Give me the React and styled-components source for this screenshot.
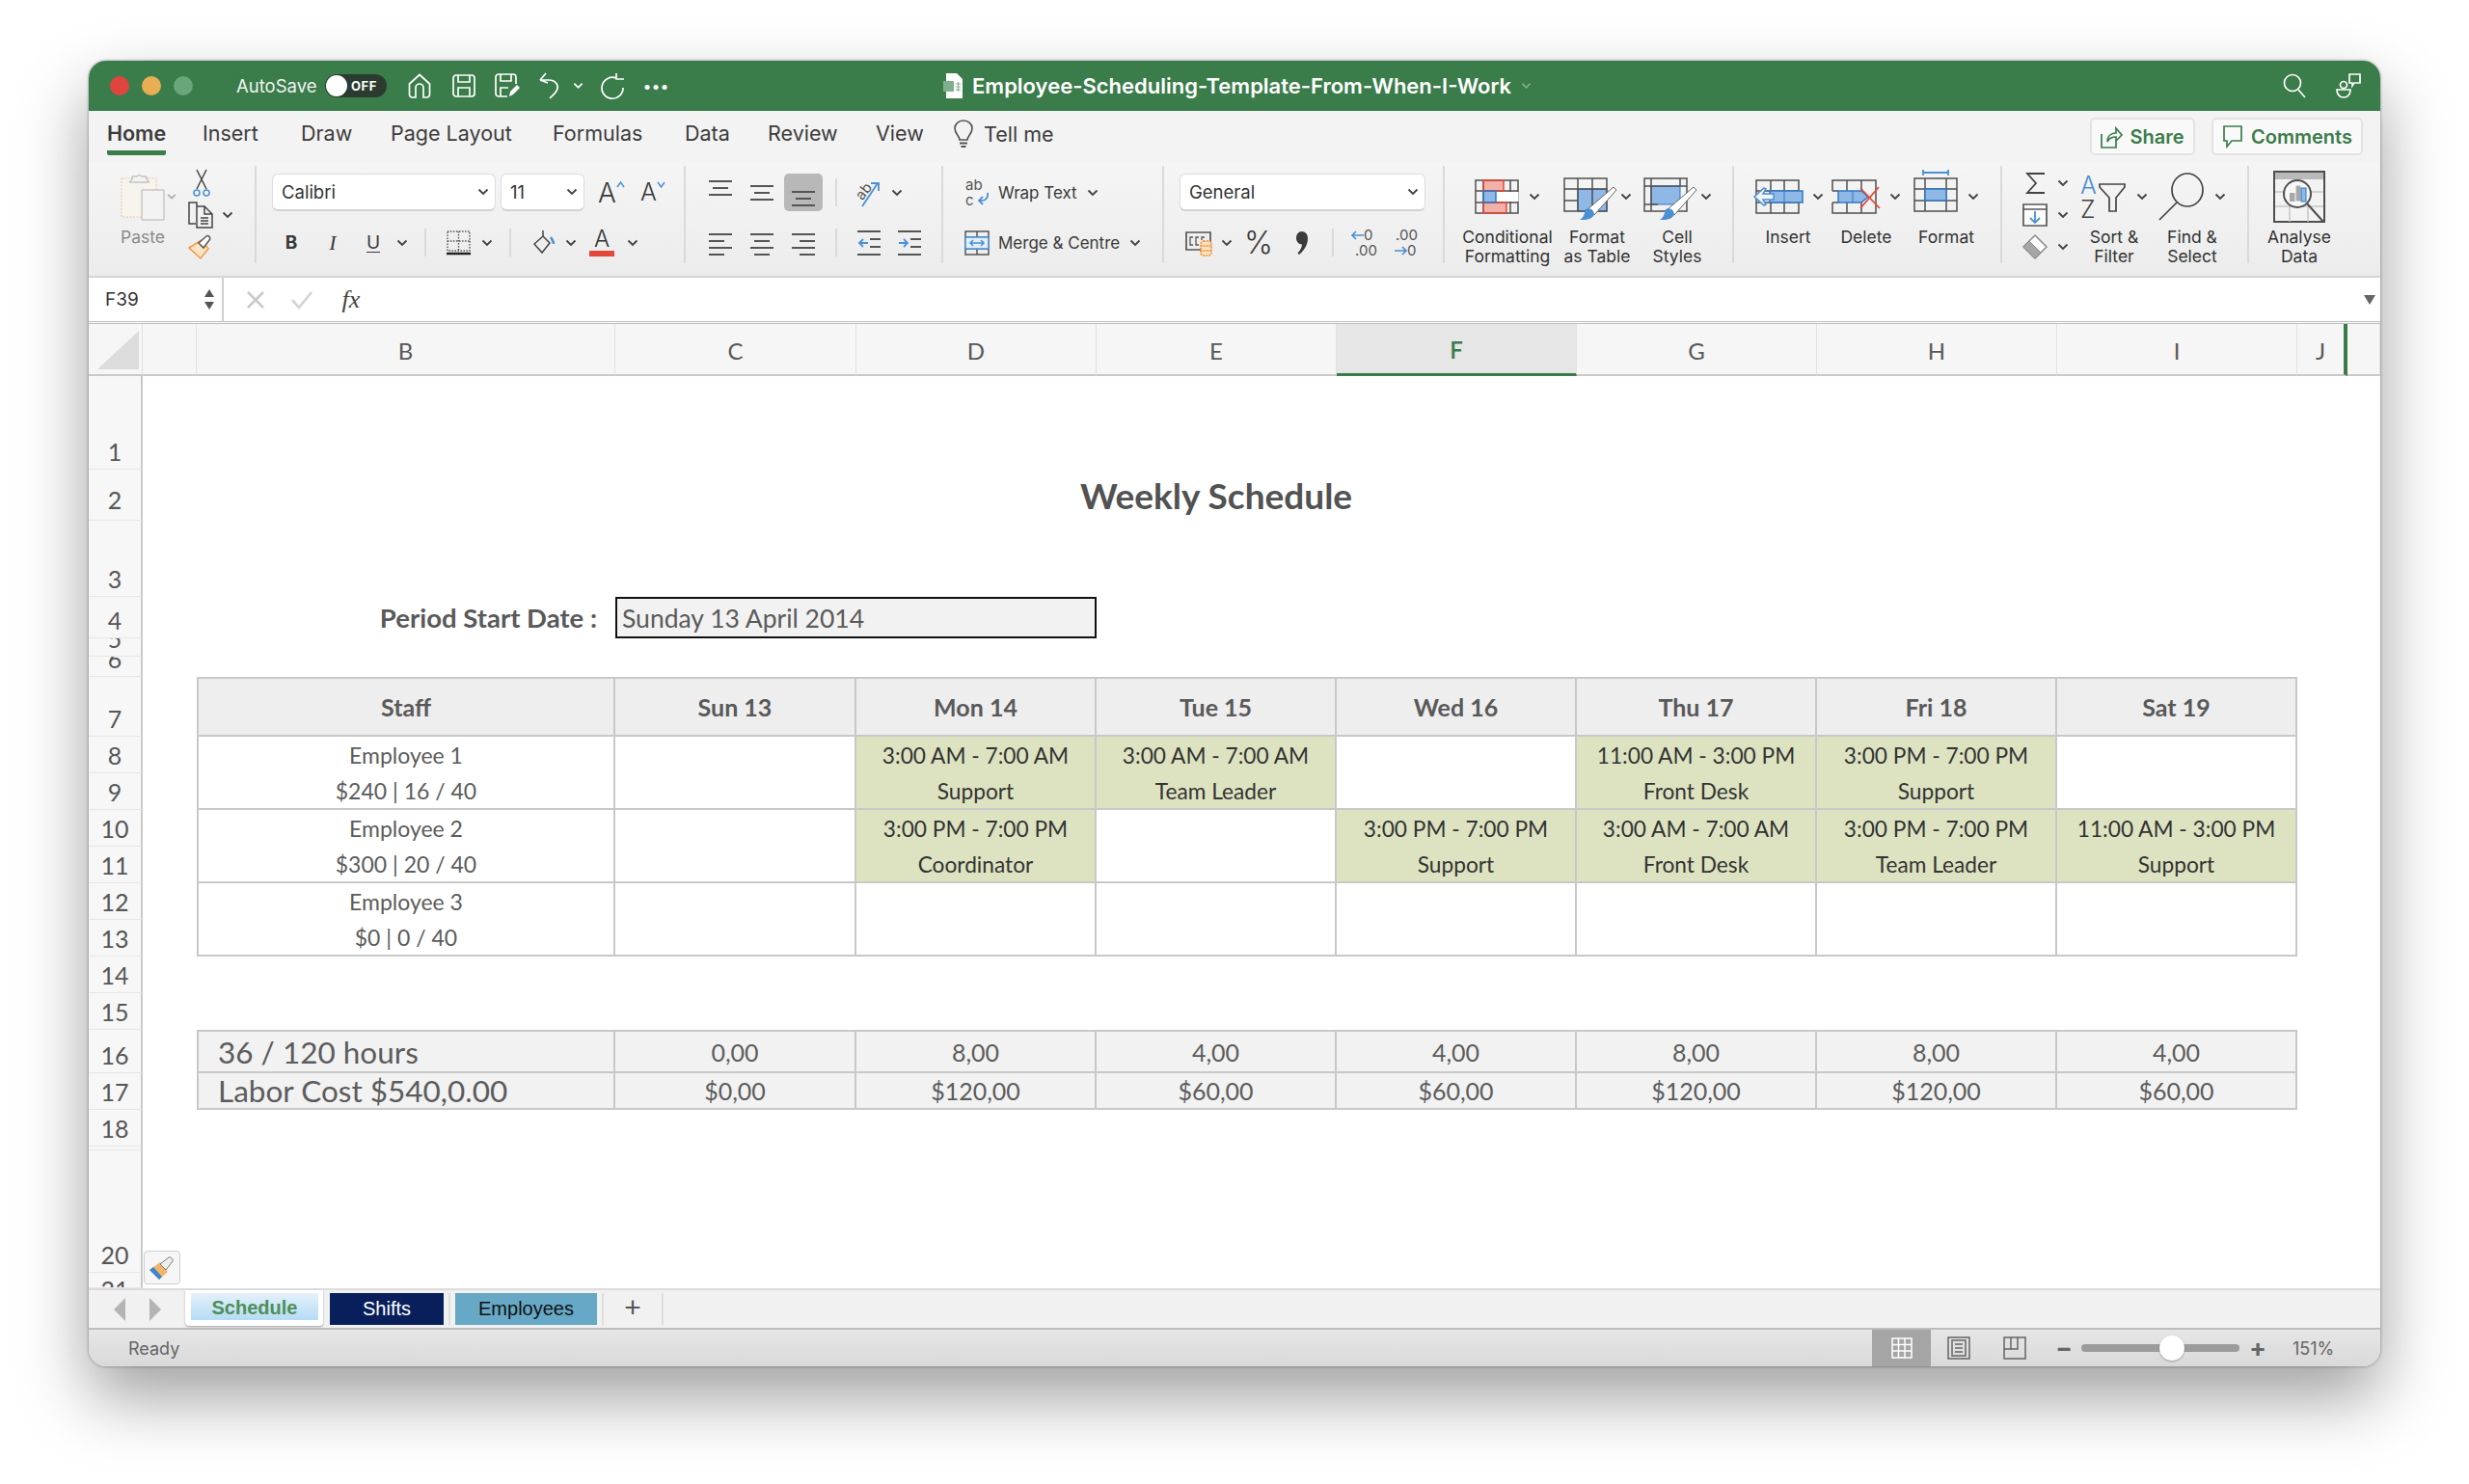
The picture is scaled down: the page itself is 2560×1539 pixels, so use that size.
import React from "react";
import styled, { createGlobalStyle } from "styled-components";

const GREEN = "#3a7c4a";
const INK = "#4a4a4a";
const BLUE = "#4a90d6";
const FILL = "#8fb8e6";
const RED = "#e2483a";
const UI = `Inter, "Liberation Sans", sans-serif`;
const SHEET = `Lato, "Open Sans", sans-serif`;

const Global = createGlobalStyle`
  html, body { margin: 0; background: #fff; }
  * { box-sizing: border-box; }
  svg { overflow: visible; }
`;

const Page = styled.div`
  padding: 63px 92px 122px;
  font-family: ${UI};
  color: #333;
`;

const Window = styled.div`
  width: 2376px;
  height: 1354px;
  display: flex;
  flex-direction: column;
  border-radius: 18px;
  overflow: hidden;
  background: #f3f3f3;
  box-shadow: 0 32px 70px rgba(0, 0, 0, 0.38), 0 0 3px rgba(0, 0, 0, 0.45);
`;

const Slot = styled.span`
  flex: none;
  display: inline-flex;
  align-items: center;
  justify-content: center;
  width: ${(p) => p.$w}px;
  margin-left: ${(p) => p.$ml || 0}px;
  height: ${(p) => (p.$active ? "39px" : "auto")};
  border-radius: 5px;
  background: ${(p) => (p.$active ? "#b8b8b8" : "transparent")};
`;

/* title bar */
const TitleBar = styled.div`
  flex: none;
  height: 52px;
  display: flex;
  align-items: center;
  padding: 0 11px 0 22px;
  background: ${GREEN};
  color: #fff;
`;
const Light = styled.span`
  flex: none;
  width: 20px;
  height: 20px;
  margin-right: 13px;
  border-radius: 50%;
  background: ${(p) => p.$c};
`;
const AutoSave = styled.span`
  margin-left: 32px;
  width: 92px;
  font-size: 18.5px;
  opacity: 0.92;
`;
const Toggle = styled.span`
  flex: none;
  width: 64px;
  height: 24px;
  margin-right: 11px;
  display: flex;
  align-items: center;
  padding-left: 1px;
  border-radius: 12px;
  background: #2b3b30;
  font-size: 13px;
  font-weight: 700;
  letter-spacing: 0.5px;
  &::before {
    content: "";
    width: 22px;
    height: 22px;
    margin-right: 4px;
    border-radius: 50%;
    background: #fff;
  }
`;
const DocTitle = styled.span`
  margin-left: 281px;
  display: flex;
  align-items: center;
  gap: 10px;
  font-size: 22px;
  font-weight: 600;
`;
const TitleRight = styled.span`
  margin-left: auto;
  display: flex;
  gap: 12px;
`;

/* menu bar */
const MenuBar = styled.div`
  flex: none;
  height: 53px;
  display: flex;
  align-items: flex-start;
  padding: 7px 18px 0 19px;
`;
const Tab = styled.span`
  flex: none;
  width: ${(p) => p.$w}px;
  padding-top: 4px;
  font-size: 21.5px;
  line-height: 24px;
`;
const TabText = styled.span`
  display: inline-block;
  padding-bottom: 6px;
  border-bottom: 5px solid ${(p) => (p.$active ? GREEN : "transparent")};
  border-radius: 2px;
  font-weight: ${(p) => (p.$active ? 600 : 400)};
  color: #3c3c3c;
`;
const TellMe = styled.span`
  display: flex;
  align-items: center;
  gap: 10px;
  padding-top: 2px;
  font-size: 21.5px;
  line-height: 28px;
  color: #3c3c3c;
`;
const Actions = styled.span`
  margin-left: auto;
  display: flex;
  gap: 17px;
`;
const ActionButton = styled.span`
  width: ${(p) => p.$w}px;
  height: 39px;
  display: flex;
  align-items: center;
  justify-content: center;
  gap: 8px;
  border: 2px solid #e3e3e3;
  border-radius: 5px;
  background: #f9f9f9;
  color: ${GREEN};
  font-size: 20px;
  font-weight: 600;
`;

/* ribbon */
const Ribbon = styled.div`
  flex: none;
  height: 120px;
  display: flex;
  padding-top: 4px;
  background: linear-gradient(#f5f5f5, #ececec);
  border-bottom: 2px solid #d4d4d4;
`;
const Group = styled.div`
  flex: none;
  width: ${(p) => p.$w}px;
  height: 101px;
  display: flex;
  flex-direction: ${(p) => (p.$col ? "column" : "row")};
  gap: ${(p) => (p.$col ? "13px" : 0)};
  padding: ${(p) => (p.$col ? "8px" : 0)} 0 0 ${(p) => p.$pl || 0}px;
  border-right: ${(p) => (p.$last ? "none" : "2px solid #dadada")};
`;
const Row = styled.div`
  flex: none;
  height: 39px;
  display: flex;
  align-items: center;
`;
const Select = styled.span`
  flex: none;
  width: ${(p) => p.$w}px;
  height: 39px;
  margin-right: 5px;
  display: flex;
  align-items: center;
  justify-content: space-between;
  padding: 0 6px 0 9px;
  border: 1px solid #dcdcdc;
  border-bottom: 2px solid #d2d2d2;
  border-radius: 6px;
  background: #fff;
  font-size: 18.5px;
  color: #333;
`;
const ToolText = styled.span`
  font-family: ${(p) => (p.$serif ? `"Liberation Serif", serif` : UI)};
  font-size: ${(p) => p.$size || 19}px;
  font-weight: ${(p) => p.$weight || 400};
  font-style: ${(p) => (p.$italic ? "italic" : "normal")};
  text-decoration: ${(p) => (p.$under ? "underline" : "none")};
  text-underline-offset: 3px;
  line-height: 1;
  color: ${(p) => p.$color || "#3a3a3a"};
`;
const RowLabel = styled.span`
  flex: none;
  margin: 0 10px 0 5px;
  font-size: 17px;
  color: #3a3a3a;
`;
const VSep = styled.span`
  width: 2px;
  height: 29px;
  background: #dadada;
`;
const ColorA = styled.span`
  display: inline-flex;
  flex-direction: column;
  align-items: center;
  font-size: 24px;
  line-height: 22px;
  font-weight: 300;
  color: #333;
  &::after {
    content: "";
    width: 26px;
    height: 6px;
    margin-top: 1px;
    background: ${RED};
  }
`;
const Small = styled.div`
  flex: none;
  width: ${(p) => p.$w}px;
  margin-left: ${(p) => p.$ml || 0}px;
  padding-top: 1px;
  display: flex;
  flex-direction: column;
`;
const SmallRow = styled.div`
  height: 36.5px;
  display: flex;
  align-items: center;
`;
const Big = styled.div`
  flex: none;
  width: ${(p) => p.$w}px;
  display: flex;
  flex-direction: column;
  align-items: center;
`;
const BigIcon = styled.div`
  flex: none;
  height: 64px;
  display: flex;
  align-items: center;
  gap: ${(p) => p.$gap ?? 10}px;
`;
const BigLabel = styled.div`
  flex: none;
  font-size: 17.5px;
  line-height: 20px;
  text-align: center;
  white-space: pre-line;
  color: ${(p) => (p.$muted ? "#8a8a8a" : "#333")};
`;

/* formula bar */
const FormulaBar = styled.div`
  flex: none;
  height: 48px;
  display: flex;
  align-items: center;
  background: #fff;
  border-bottom: 3px double #bdbdbd;
`;
const NameBox = styled.div`
  flex: none;
  width: 140px;
  height: 100%;
  display: flex;
  align-items: center;
  justify-content: space-between;
  padding: 0 8px 0 17px;
  border-right: 2px solid #cfcfcf;
  font-size: 19px;
  color: #333;
`;
const FxSep = styled.span`
  width: 2px;
  height: 26px;
  background: #e0e0e0;
`;
const Stepper = styled.span`
  display: flex;
  flex-direction: column;
  gap: 5px;
`;

/* sheet */
const Sheet = styled.div`
  position: relative;
  flex: none;
  height: 1000px;
  display: grid;
  grid-template-columns: 56px 56px 434px 250px repeat(6, 249px) 52px 1fr;
  grid-template-rows: 54px 97px 53px 79px 43px 19px 21px 62px repeat(8, 38px) 45px 38px 38px 4px 127px 16px;
  overflow: hidden;
  background: #fff;
  font-family: ${SHEET};
`;
const Corner = styled.div`
  grid-column: 1;
  grid-row: 1;
  padding: 7px 3px 5px 9px;
  background: #f6f6f6;
  border-right: 1px solid #e2e2e2;
  border-bottom: 2px solid #c9c9c9;
  &::before {
    content: "";
    display: block;
    width: 100%;
    height: 100%;
    background: #dcdcdc;
    clip-path: polygon(100% 0, 100% 100%, 0 100%);
  }
`;
const ColHead = styled.div`
  grid-column: ${(p) => p.$col};
  grid-row: 1;
  display: flex;
  align-items: center;
  justify-content: center;
  padding-top: 2px;
  background: ${(p) => (p.$on ? "#e6e6e6" : "#f6f6f6")};
  border-right: ${(p) => (p.$freeze ? `4px solid ${GREEN}` : "1px solid #e2e2e2")};
  border-bottom: ${(p) => (p.$on ? `3px solid ${GREEN}` : "2px solid #c9c9c9")};
  font-size: 24px;
  color: ${(p) => (p.$on ? GREEN : "#585858")};
  font-weight: ${(p) => (p.$on ? 600 : 400)};
`;
const RowHead = styled.div`
  grid-column: 1;
  grid-row: ${(p) => p.$row + 1};
  display: flex;
  justify-content: center;
  align-items: ${(p) => (p.$top ? "flex-start" : "flex-end")};
  overflow: hidden;
  padding: ${(p) => (p.$top ? "2px 0 0" : `0 0 ${p.$row === 2 ? 6 : 3}px`)};
  background: #f7f7f7;
  border-right: 2px solid #c9c9c9;
  border-bottom: 1px solid #e6e6e6;
  font-size: 25px;
  line-height: 30px;
  color: #565656;
`;
const SheetTitle = styled.div`
  grid-column: 4 / span 5;
  grid-row: 3;
  display: flex;
  align-items: center;
  justify-content: center;
  font-size: 37px;
  font-weight: 700;
  color: #525252;
`;
const DateLabel = styled.div`
  grid-column: 3;
  grid-row: 5;
  display: flex;
  align-items: center;
  justify-content: flex-end;
  padding-right: 19px;
  font-size: 27.5px;
  font-weight: 700;
  color: #595959;
`;
const DateBox = styled.div`
  grid-column: 4 / span 2;
  grid-row: 5;
  display: flex;
  align-items: center;
  padding-left: 5px;
  border: 2px solid #111;
  background: #f2f2f2;
  font-size: 26.5px;
  color: #5a5a5a;
`;
const Cell = styled.div`
  grid-column: ${(p) => p.$col};
  grid-row: ${(p) => p.$row} / span ${(p) => p.$span || 1};
  display: flex;
  flex-direction: column;
  align-items: ${(p) => (p.$start ? "flex-start" : "center")};
  justify-content: center;
  padding-left: ${(p) => (p.$start ? "20px" : 0)};
  padding-top: ${(p) => (p.$span ? "2px" : 0)};
  background: ${(p) => p.$bg || "#fff"};
  border-right: 2px solid #c8c8c8;
  border-bottom: 2px solid #c8c8c8;
  border-top: ${(p) => (p.$top ? "2px solid #c8c8c8" : "none")};
  border-left: ${(p) => (p.$left ? "2px solid #c8c8c8" : "none")};
  font-size: ${(p) => p.$size || 23}px;
  font-weight: ${(p) => p.$weight || 400};
  color: ${(p) => p.$color || "#5c5c5c"};
  white-space: nowrap;
`;
const Line = styled.div`
  height: 37px;
  line-height: 37px;
`;
const Painter = styled.div`
  position: absolute;
  left: 57px;
  top: 961px;
  width: 38px;
  height: 35px;
  display: flex;
  align-items: center;
  justify-content: center;
  border: 1.5px solid #cfcfcf;
  border-radius: 4px;
  background: #f6f6f6;
`;

/* sheet tabs */
const TabBar = styled.div`
  flex: none;
  height: 43px;
  display: flex;
  align-items: flex-start;
  padding-left: 13px;
  background: #f1f1f1;
  border-top: 2px solid #dcdcdc;
  border-bottom: 2px solid #bdbdbd;
`;
const Nav = styled.span`
  flex: none;
  width: ${(p) => p.$w}px;
  height: 39px;
  display: inline-flex;
  align-items: center;
  justify-content: center;
`;
const ActiveSheet = styled.span`
  flex: none;
  width: 143px;
  height: 37px;
  margin-left: 13px;
  padding: 3px 5px 0 6px;
  border-radius: 0 0 4px 4px;
  background: #fff;
  box-shadow: 0 1px 2px rgba(0, 0, 0, 0.35);
`;
const ActiveFace = styled.span`
  height: 28px;
  display: flex;
  align-items: center;
  justify-content: center;
  padding-top: 2px;
  background: linear-gradient(#e3f1fb, #b6dbf6);
  color: #4d8f57;
  font-family: "Liberation Sans", sans-serif;
  font-size: 20px;
  font-weight: 700;
`;
const SheetTab = styled.span`
  flex: none;
  width: ${(p) => p.$w}px;
  height: 33px;
  margin-top: 3px;
  margin-left: ${(p) => p.$ml || 0}px;
  display: flex;
  align-items: center;
  justify-content: center;
  background: ${(p) => p.$bg};
  color: ${(p) => p.$color};
  font-family: "Liberation Sans", sans-serif;
  font-size: 20px;
`;
const TabSep = styled.span`
  flex: none;
  width: 2px;
  height: 33px;
  margin: 3px ${(p) => p.$r}px 0 ${(p) => p.$l}px;
  background: #dedede;
`;
const Plus = styled.span`
  flex: none;
  width: 60px;
  height: 35px;
  display: flex;
  align-items: center;
  justify-content: center;
  font-family: "Liberation Sans", sans-serif;
  font-size: 30px;
  color: #555;
`;

/* status bar */
const StatusBar = styled.div`
  flex: 1;
  display: flex;
  align-items: center;
  padding-left: 41px;
  background: linear-gradient(#e6e6e6, #d9d9d9);
  font-size: 18px;
  color: #666;
`;
const ViewButton = styled.span`
  flex: none;
  width: ${(p) => p.$w}px;
  align-self: stretch;
  display: inline-flex;
  align-items: center;
  justify-content: center;
  margin-left: ${(p) => (p.$first ? "auto" : 0)};
  background: ${(p) => (p.$on ? "#a5a5a5" : "transparent")};
`;
const Zoom = styled.span`
  flex: none;
  width: 164px;
  height: 8px;
  margin: 0 9px 0 6px;
  display: flex;
  align-items: center;
  border-radius: 4px;
  background: #9c9c9c;
  padding-left: 81px;
  &::before {
    content: "";
    flex: none;
    width: 26px;
    height: 26px;
    border-radius: 50%;
    background: #fff;
    box-shadow: 0 1px 2px rgba(0, 0, 0, 0.3);
  }
`;
const ZoomText = styled.span`
  flex: none;
  width: 117px;
  padding-left: 26px;
`;

/* ---- icons ---- */
const Chev = ({ c = "#444", w = 12 }) => (
  <svg width={w} height="8" viewBox="0 0 12 8">
    <path d="M1.5 1.5 6 6l4.5-4.5" fill="none" stroke={c} strokeWidth="1.9" />
  </svg>
);

const Wh = ({ w, h, children, sw = 1.7 }) => (
  <svg width={w} height={h} viewBox={`0 0 ${w} ${h}`} fill="none" stroke="#fff" strokeWidth={sw}>
    {children}
  </svg>
);
const HomeI = () => (
  <Wh w={24} h={26}><path d="M1.5 11 12 1.5 22.5 11v11a3 3 0 0 1-3 3H16V15a4 4 0 0 0-8 0v10H4.500a3 3 0 0 1-3-3z" /></Wh>
);
const SaveI = () => (
  <Wh w={24} h={24}><path d="M1 4a3 3 0 0 1 3-3h16a3 3 0 0 1 3 3v16a3 3 0 0 1-3 3H4a3 3 0 0 1-3-3zM6 1v7h12V1M6 23v-9h12v9" /></Wh>
);
const SaveAsI = () => (
  <Wh w={26} h={26}>
    <path d="M13 24H4a3 3 0 0 1-3-3V4a3 3 0 0 1 3-3h15a3 3 0 0 1 3 3v7M6 1v7h11V1M6 24v-9h8" />
    <path d="m15 24 1-5 7-7 3 3-7 7z" fill="#fff" stroke="none" />
  </Wh>
);
const UndoI = () => (
  <Wh w={22} h={28}><path d="M1 8 7 1M1 8l8 3M1 8h9c7 0 10 5 9 9-1 4-5 7-8 10" /></Wh>
);
const RedoI = () => (
  <Wh w={28} h={28}><path d="M18 6a11 11 0 1 0 7 10M18 1v6h8" /></Wh>
);
const SearchI = () => (
  <Wh w={24} h={26}><circle cx="10" cy="10" r="8.500" /><path d="m16 17 7 8" /></Wh>
);
const ChatI = () => (
  <Wh w={28} h={28}>
    <circle cx="9" cy="13" r="3.500" /><path d="M2 18h14c0 5-3 8-7 8s-7-3-7-8zM15 2h11v9h-6l-2 3v-3h-3z" />
  </Wh>
);
const SheetFile = () => (
  <svg width="20" height="26" viewBox="0 0 20 26">
    <path d="M3 0h11l6 6v20H3z" fill="#fff" />
    <rect x="0" y="8" width="11" height="11" fill="#7fb08c" />
    <path d="M13 11h5M13 14h5M13 17h5M15.500 9v10" stroke="#7fb08c" />
  </svg>
);
const Bulb = () => (
  <svg width="22" height="30" viewBox="0 0 22 30" fill="none" stroke="#555" strokeWidth="1.7">
    <path d="M7 21c0-4-5-6-5-12a9 8 0 0 1 18 0c0 6-5 8-5 12z" />
    <path d="M7 24.500h8M8.500 28h5" strokeWidth="2.200" />
  </svg>
);
const ShareI = () => (
  <svg width="22" height="24" viewBox="0 0 22 24" fill="none" stroke={GREEN} strokeWidth="1.700">
    <path d="M1 9v14h15v-8M7 17c0-6 4-9 9-9V3l6 7-6 6v-4c-4 0-7 1-9 5z" />
  </svg>
);
const CommentI = () => (
  <svg width="22" height="24" viewBox="0 0 22 24" fill="none" stroke={GREEN} strokeWidth="1.700">
    <path d="M2 1h18v15H10l-5 6v-6H2z" />
  </svg>
);

const PasteI = () => (
  <svg width="46" height="50" viewBox="0 0 46 50" fill="none">
    <path d="M1 6h36v40H1z" stroke="#e3c9a0" strokeDasharray="2 1.500" fill="#f7f4ee" />
    <path d="M12 7V4h5a3 3 0 0 1 5 0h5v3l3 3H9z" stroke="#aaa" fill="#f3f3f3" />
    <path d="M22 18h23v31H22z" stroke="#b2b2b2" fill="#f3f3f3" />
  </svg>
);
const CutI = () => (
  <svg width="18" height="28" viewBox="0 0 18 28" fill="none" stroke="#444" strokeWidth="1.500">
    <path d="M4 0l10 20M14 0 4 20" />
    <circle cx="4" cy="24" r="3" stroke={BLUE} /><circle cx="14" cy="24" r="3" stroke={BLUE} />
  </svg>
);
const CopyI = () => (
  <svg width="28" height="28" viewBox="0 0 28 28" fill="none" stroke="#444" strokeWidth="1.500">
    <path d="M9 5V1H1v22h7M9 5h8l8 8v14H9zM17 5v8h8M13 17h8M13 20h8M13 23h8" />
  </svg>
);
const BrushI = () => (
  <svg width="28" height="26" viewBox="0 0 28 26">
    <path d="M1 14 14 6l7 9-8 10z" fill="#fbe3c4" stroke="#ee9a45" strokeWidth="1.500" />
    <path d="m11 9 8-7c2-2 5 2 3 4l-6 8z" fill="#fff" stroke="#555" strokeWidth="1.500" />
  </svg>
);
const GrowA = ({ up, size }) => (
  <>
    <ToolText $size={size} $weight={300}>A</ToolText>
    <svg width="9" height="7" viewBox="0 0 9 7" style={{ marginBottom: 16 }}>
      <path d={up ? "M1 6 4.500 1 8 6" : "M1 1l3.500 5L8 1"} fill="none" stroke={BLUE} strokeWidth="1.500" />
    </svg>
  </>
);
const BorderI = () => (
  <svg width="25" height="25" viewBox="0 0 25 25" fill="none" stroke="#555" strokeWidth="1.400">
    <path d="M1 1h23v20H1zM12.500 1v20M1 11h23" strokeDasharray="1.500 1.500" />
    <path d="M0 24h25" strokeWidth="2.500" stroke="#222" />
  </svg>
);
const BucketI = () => (
  <svg width="24" height="28" viewBox="0 0 24 28" fill="none" stroke="#444" strokeWidth="1.500">
    <path d="M11 1v6l-9 8 8 9 8-10-7-7" />
    <path d="M19 8c2 3 3 5 3 7" stroke={BLUE} strokeWidth="2.500" />
  </svg>
);
const Lines = ({ ys, spans }) => (
  <svg width="24" height="38" viewBox="0 0 24 38" stroke="#555" strokeWidth="2">
    {ys.map((y, i) => (
      <path key={y} d={`M${spans[i][0]} ${y}H${spans[i][1]}`} />
    ))}
  </svg>
);
const VSPANS = [[0, 24], [4, 20], [0, 24]];
const AlignV = ({ top }) => <Lines ys={top} spans={VSPANS} />;
const AlignH = ({ kind }) => {
  const s = {
    l: [[0, 24], [0, 16], [0, 24], [0, 16]],
    c: [[0, 24], [4, 20], [0, 24], [4, 20]],
    r: [[0, 24], [8, 24], [0, 24], [8, 24]],
  }[kind];
  return <Lines ys={[10, 17, 24, 31]} spans={s} />;
};
const OrientI = () => (
  <svg width="30" height="30" viewBox="0 0 30 30">
    <text x="1" y="19" fontSize="15" fontFamily="Inter, sans-serif" fill="#555" transform="rotate(-52 9 14)">ab</text>
    <path d="M8 29 24 5M17 5h8v8" fill="none" stroke={BLUE} strokeWidth="1.800" />
  </svg>
);
const IndentI = ({ out }) => (
  <svg width="24" height="26" viewBox="0 0 24 26" fill="none">
    <path d="M0 1h24M13 9h11M13 17h11M0 25h24" stroke="#555" strokeWidth="2" />
    <path d={out ? "M11 13H2m4-4-4 4 4 4" : "M1 13h9m-4-4 4 4-4 4"} stroke={BLUE} strokeWidth="1.800" />
  </svg>
);
const WrapI = () => (
  <svg width="26" height="30" viewBox="0 0 26 30">
    <text x="1" y="12" fontSize="15" fontFamily="Inter, sans-serif" fill="#555">ab</text>
    <text x="1" y="28" fontSize="15" fontFamily="Inter, sans-serif" fill="#555">c</text>
    <path d="M24 15c1 6-3 9-9 8m4-4-4 4 4 4" fill="none" stroke={BLUE} strokeWidth="1.800" />
  </svg>
);
const MergeI = () => (
  <svg width="26" height="26" viewBox="0 0 26 26" fill="none" stroke="#555" strokeWidth="1.500">
    <path d="M1 1h24v24H1zM1 7h24M1 19h24M13 1v6M13 19v6" />
    <rect x="1" y="7" width="24" height="12" fill="#e4effa" stroke={BLUE} />
    <path d="M6 13h14M9 10l-3 3 3 3M17 10l3 3-3 3" stroke={BLUE} />
  </svg>
);
const MoneyI = () => (
  <svg width="28" height="28" viewBox="0 0 28 28" fill="none">
    <path d="M1 3h25v18H1z" stroke="#555" strokeWidth="1.700" />
    <path d="M8 8H5v8h3M14 8h-3v8h3M20 8h-3v3" stroke="#555" strokeWidth="1.300" />
    <rect x="16" y="12" width="11" height="15" rx="3" fill="#fde2c2" stroke="#ee8b2c" strokeWidth="1.500" strokeDasharray="2 1" />
    <path d="M16 17h11M16 22h11" stroke="#ee8b2c" />
  </svg>
);
const CommaI = () => (
  <svg width="14" height="26" viewBox="0 0 14 26">
    <path d="M6.500 1C10.500 1 13 4 13 8c0 7-4 13-9 17l-1.500-1.500C5.500 20 7 17 7 14.500 3.500 14.500 1 11.500 1 8c0-4 2.500-7 5.500-7z" fill="#3a3a3a" />
  </svg>
);
const DecI = ({ more }) => (
  <svg width="30" height="30" viewBox="0 0 30 30">
    <text x={more ? 14 : 2} y="12" fontSize="15" fontFamily="Inter, sans-serif" fill="#555">{more ? "0" : ".00"}</text>
    <text x={more ? 5 : 14} y="28" fontSize="15" fontFamily="Inter, sans-serif" fill="#555">{more ? ".00" : "0"}</text>
    <path d={more ? "M14 7H2m4-4-4 4 4 4" : "M1 23h12m-4-4 4 4-4 4"} fill="none" stroke={BLUE} strokeWidth="1.700" />
  </svg>
);

const G = "#4f4f4f";
const CondI = () => (
  <svg width="46" height="36" viewBox="0 0 46 36" fill="none">
    <rect x="9" y="1" width="21" height="11" fill="#f2b1a8" />
    <rect x="9" y="12" width="13" height="12" fill={FILL} />
    <rect x="9" y="24" width="24" height="11" fill="#f2b1a8" />
    <path d="M1 1h44v34H1zM1 12h44M1 24h44M9 1v34M37 1v34" stroke={G} strokeWidth="1.500" />
    <rect x="22.500" y="13" width="23" height="10" fill="#fff" />
    <path d="M9 1h21v11H9zM9 24h24v11H9z" stroke={RED} strokeWidth="1.500" />
    <path d="M9 12h13v12H9z" stroke="#2f78c4" strokeWidth="1.500" />
  </svg>
);
const TablePaint = ({ cell }) => (
  <svg width="56" height="52" viewBox="0 -6 56 52" fill="none">
    {cell ? (
      <rect x="8" y="9" width="30" height="19" fill={FILL} stroke="#2f78c4" />
    ) : (
      <rect x="15" y="12" width="30" height="23" fill={FILL} stroke="#2f78c4" />
    )}
    <path d={cell ? "M1 1h44v34H1zM1 9h44M1 28h14M8 1v34M38 1v8" : "M1 1h44v34H1zM1 12h44M1 24h14M15 1v34M30 1v34"} stroke={G} strokeWidth="1.500" />
    <path d="M24 34 52 10l3 3-23 26z" fill="#fff" stroke="#666" />
    <path d="M23 33c5-2 8 0 9 5-2 6-9 6-15 6 4-2 5-7 6-11z" fill="#4a8fd1" />
  </svg>
);
const InsertI = () => (
  <svg width="52" height="36" viewBox="0 0 52 36" fill="none">
    <rect x="18" y="12" width="34" height="12" fill={FILL} />
    <path d="M4 1h44v34H4zM4 12h44M4 24h44M19 1v34M33 1v34" stroke={G} strokeWidth="1.500" />
    <rect x="18" y="12" width="34" height="12" fill={FILL} stroke="#2f78c4" strokeWidth="1.500" />
    <path d="M33 12v12" stroke="#2f78c4" />
    <path d="M22 15H11l3-5-2-1-10 9 10 9 2-1-3-5h11z" fill="#f3f3f3" stroke={BLUE} strokeWidth="1.500" />
  </svg>
);
const DeleteI = () => (
  <svg width="50" height="36" viewBox="0 0 50 36" fill="none">
    <path d="M1 12V1h45v34H1V24M1 12h6M1 24h6M16 1v11M31 1v11M16 24v11M31 24v11" stroke={G} strokeWidth="1.500" />
    <path d="M7 12h24l7 6-7 6H7z" fill={FILL} stroke="#2f78c4" strokeWidth="1.500" />
    <path d="M22 12v12" stroke="#2f78c4" />
    <path d="m30 9 20 21M49 8 30 30" stroke={RED} strokeWidth="1.800" />
  </svg>
);
const FormatI = () => (
  <svg width="46" height="60" viewBox="0 0 46 60" fill="none">
    <path d="M10 5h26M10 2v6M36 2v6" stroke={BLUE} strokeWidth="1.800" />
    <path d="M1 11h44v34H1zM1 22h44M1 34h44M12 11v34M34 11v34" stroke={G} strokeWidth="1.500" />
    <rect x="12" y="22" width="22" height="12" fill={FILL} stroke="#2f78c4" strokeWidth="1.500" />
  </svg>
);
const SigmaI = () => (
  <svg width="20" height="24" viewBox="0 0 20 24" fill="none" stroke="#444" strokeWidth="1.800">
    <path d="M20 2H2l9 10-9 10h18" />
  </svg>
);
const FillDownI = () => (
  <svg width="26" height="24" viewBox="0 0 26 24" fill="none">
    <path d="M1 1h24v22H1z" fill="#fff" stroke="#555" strokeWidth="1.700" />
    <path d="M1 6h24" stroke="#555" strokeWidth="1.700" />
    <path d="M13 8v11m-5-4 5 5 5-5" stroke={BLUE} strokeWidth="1.800" />
  </svg>
);
const ClearI = () => (
  <svg width="26" height="26" viewBox="0 0 26 26">
    <path d="m13 1 12 12-12 12L1 13z" fill="#fff" stroke="#8a8a8a" strokeWidth="1.500" />
    <path d="m7 7 12 12-6 6L1 13z" fill="#a6a6a6" stroke="#8a8a8a" />
  </svg>
);
const SortI = () => (
  <svg width="48" height="46" viewBox="0 0 48 46">
    <text x="0" y="20" fontSize="25" fontFamily="Inter, sans-serif" fontWeight="300" fill={BLUE}>A</text>
    <text x="0" y="45" fontSize="25" fontFamily="Inter, sans-serif" fontWeight="300" fill="#444">Z</text>
    <path d="M20 10h26v3l-9 11v14h-7V24l-10-11z" fill="none" stroke="#444" strokeWidth="1.700" />
  </svg>
);
const FindI = () => (
  <svg width="48" height="50" viewBox="0 0 48 50" fill="none" stroke="#444" strokeWidth="1.700">
    <ellipse cx="30" cy="18" rx="16" ry="17" />
    <path d="M19 31 1 49" />
  </svg>
);
const AnalyseI = () => (
  <svg width="54" height="54" viewBox="0 0 54 54" fill="none">
    <rect x="1" y="1" width="52" height="52" fill="#f3f3f3" stroke={G} strokeWidth="2" />
    <rect x="2" y="2" width="50" height="7" fill="#b9b9b9" />
    <path d="M2 22h50M2 37h50M17 37v16M36 37v16" stroke="#c6c6c6" strokeWidth="1.500" />
    <circle cx="25" cy="24" r="14" fill="#f7f7f7" stroke={G} strokeWidth="2" />
    <rect x="17" y="23" width="6" height="9" fill="#a8a8a8" />
    <rect x="23" y="15" width="6" height="17" fill="#a8a8a8" stroke="#fff" />
    <rect x="29" y="18" width="5" height="14" fill={FILL} stroke="#2f78c4" />
    <path d="m35 34 17 19" stroke={G} strokeWidth="2" />
  </svg>
);
const XI = () => (
  <svg width="20" height="20" viewBox="0 0 20 20" stroke="#c9c9c9" strokeWidth="2.600">
    <path d="m2 2 16 16M18 2 2 18" />
  </svg>
);
const CheckI = () => (
  <svg width="24" height="20" viewBox="0 0 24 20" fill="none" stroke="#d2d2d2" strokeWidth="2.600">
    <path d="m2 10 7 8L22 2" />
  </svg>
);
const Tri = ({ dir = "up", c = "#555", w = 10, h = 8 }) => {
  const d = {
    up: `M${w / 2} 0 ${w} ${h} 0 ${h}z`,
    down: `M0 0h${w}L${w / 2} ${h}z`,
    left: `M${w} 0v${h}L0 ${h / 2}z`,
    right: `M0 0v${h}L${w} ${h / 2}z`,
  }[dir];
  return (
    <svg width={w} height={h} viewBox={`0 0 ${w} ${h}`}>
      <path d={d} fill={c} />
    </svg>
  );
};
const PaintBadge = () => (
  <svg width="28" height="26" viewBox="0 0 28 26">
    <path d="M1 15 12 7l8 10-9 8z" fill="#f2b66a" />
    <path d="m1 15 10 10 3-3L5 12z" fill="#3d86d0" />
    <path d="m12 9 9-7c2-1 5 2 4 4l-7 9z" fill="#eee" stroke="#777" />
  </svg>
);
const NormalView = () => (
  <svg width="22" height="22" viewBox="0 0 22 22" stroke="#fff" strokeWidth="1.500" fill="#a5a5a5">
    <path d="M1 1h20v20H1zM1 7.500h20M1 14h20M7.500 1v20M14 1v20" />
  </svg>
);
const PageView = () => (
  <svg width="24" height="24" viewBox="0 0 24 24" fill="none" stroke="#666" strokeWidth="1.500">
    <path d="M1 1h22v22H1zM5 4h14v16H5zM8 8h8M8 12h8M8 16h8" />
  </svg>
);
const BreakView = () => (
  <svg width="24" height="24" viewBox="0 0 24 24" fill="none" stroke="#666" strokeWidth="1.500">
    <path d="M1 1h22v22H1zM1 13h14V1M8 1v12" />
  </svg>
);

/* ---- data ---- */
const COLS = ["B", "C", "D", "E", "F", "G", "H", "I", "J"];
const DAYS = ["Sun 13", "Mon 14", "Tue 15", "Wed 16", "Thu 17", "Fri 18", "Sat 19"];
const AM = "3:00 AM - 7:00 AM";
const PM = "3:00 PM - 7:00 PM";
const MID = "11:00 AM - 3:00 PM";
const STAFF = [
  { row: 8, name: "Employee 1", pay: "$240 | 16 / 40", shifts: [null, [AM, "Support"], [AM, "Team Leader"], null, [MID, "Front Desk"], [PM, "Support"], null] },
  { row: 10, name: "Employee 2", pay: "$300 | 20 / 40", shifts: [null, [PM, "Coordinator"], null, [PM, "Support"], [AM, "Front Desk"], [PM, "Team Leader"], [MID, "Support"]] },
  { row: 12, name: "Employee 3", pay: "$0 | 0 / 40", shifts: [null, null, null, null, null, null, null] },
];
const HOURS = ["0,00", "8,00", "4,00", "4,00", "8,00", "8,00", "4,00"];
const COSTS = ["$0,00", "$120,00", "$60,00", "$60,00", "$120,00", "$120,00", "$60,00"];
const MENU = [["Home", 99], ["Insert", 102], ["Draw", 93], ["Page Layout", 168], ["Formulas", 137], ["Data", 86], ["Review", 112], ["View", 80]];
const ROW_LABELS = [1, 2, 3, 4, 5, 6, 7, 8, 9, 10, 11, 12, 13, 14, 15, 16, 17, 18, "", 20];

export default function App() {
  return (
    <Page>
      <Global />
      <Window>
        <TitleBar>
          <Light $c="#e0443e" />
          <Light $c="#e9ae54" />
          <Light $c="#69a678" />
          <AutoSave>AutoSave</AutoSave>
          <Toggle>OFF</Toggle>
          <Slot $w={46}><HomeI /></Slot>
          <Slot $w={45}><SaveI /></Slot>
          <Slot $w={45}><SaveAsI /></Slot>
          <Slot $w={43}><UndoI /></Slot>
          <Slot $w={16}><Chev c="#fff" w={11} /></Slot>
          <Slot $w={56}><RedoI /></Slot>
          <Slot $w={34}>•••</Slot>
          <DocTitle>
            <SheetFile />
            Employee-Scheduling-Template-From-When-I-Work
            <Chev c="#7fae8b" w={11} />
          </DocTitle>
          <TitleRight>
            <Slot $w={44}><SearchI /></Slot>
            <Slot $w={44}><ChatI /></Slot>
          </TitleRight>
        </TitleBar>

        <MenuBar>
          {MENU.map(([label, w], i) => (
            <Tab key={label} $w={w}>
              <TabText $active={i === 0}>{label}</TabText>
            </Tab>
          ))}
          <TellMe><Bulb />Tell me</TellMe>
          <Actions>
            <ActionButton $w={109}><ShareI />Share</ActionButton>
            <ActionButton $w={157}><CommentI />Comments</ActionButton>
          </Actions>
        </MenuBar>

        <Ribbon>
          <Group $w={174} $pl={26}>
            <Big $w={60}>
              <BigIcon $gap={0}><PasteI /></BigIcon>
              <BigLabel $muted>Paste</BigLabel>
            </Big>
            <BigIcon><Slot $w={16} $ml={-8}><Chev c="#aaa" w={10} /></Slot></BigIcon>
            <Small $w={60} $ml={9}>
              <SmallRow><Slot $w={28}><CutI /></Slot></SmallRow>
              <SmallRow><Slot $w={28}><CopyI /></Slot><Slot $w={26}><Chev /></Slot></SmallRow>
              <SmallRow><Slot $w={28}><BrushI /></Slot></SmallRow>
            </Small>
          </Group>

          <Group $w={445} $pl={16} $col>
            <Row>
              <Select $w={232}>Calibri<Chev /></Select>
              <Select $w={87}>11<Chev /></Select>
              <Slot $w={46}><GrowA up size={28} /></Slot>
              <Slot $w={40}><GrowA size={25} /></Slot>
            </Row>
            <Row>
              <Slot $w={40}><ToolText $weight={700}>B</ToolText></Slot>
              <Slot $w={46}><ToolText $italic $serif $size={22}>I</ToolText></Slot>
              <Slot $w={38}><ToolText $under>U</ToolText></Slot>
              <Slot $w={22}><Chev /></Slot>
              <Slot $w={26}><VSep /></Slot>
              <Slot $w={42}><BorderI /></Slot>
              <Slot $w={18}><Chev /></Slot>
              <Slot $w={30}><VSep /></Slot>
              <Slot $w={40}><BucketI /></Slot>
              <Slot $w={16}><Chev /></Slot>
              <Slot $w={48}><ColorA>A</ColorA></Slot>
              <Slot $w={16}><Chev /></Slot>
            </Row>
          </Group>

          <Group $w={267} $pl={14} $col>
            <Row>
              <Slot $w={44}><AlignV top={[7, 14, 21]} /></Slot>
              <Slot $w={42}><AlignV top={[12, 19, 26]} /></Slot>
              <Slot $w={40} $ml={2} $active><AlignV top={[18, 25, 32]} /></Slot>
              <Slot $w={28}><VSep /></Slot>
              <Slot $w={40}><OrientI /></Slot>
              <Slot $w={18}><Chev /></Slot>
            </Row>
            <Row>
              <Slot $w={44}><AlignH kind="l" /></Slot>
              <Slot $w={42}><AlignH kind="c" /></Slot>
              <Slot $w={40} $ml={2}><AlignH kind="r" /></Slot>
              <Slot $w={28}><VSep /></Slot>
              <Slot $w={40}><IndentI out /></Slot>
              <Slot $w={40} $ml={2}><IndentI /></Slot>
            </Row>
          </Group>

          <Group $w={229} $pl={18} $col>
            <Row><Slot $w={34}><WrapI /></Slot><RowLabel>Wrap Text</RowLabel><Chev /></Row>
            <Row><Slot $w={34}><MergeI /></Slot><RowLabel>Merge &amp; Centre</RowLabel><Chev /></Row>
          </Group>

          <Group $w={291} $pl={16} $col>
            <Row><Select $w={255}>General<Chev /></Select></Row>
            <Row>
              <Slot $w={40}><MoneyI /></Slot>
              <Slot $w={18}><Chev /></Slot>
              <Slot $w={48}><ToolText $size={32} $weight={300}>%</ToolText></Slot>
              <Slot $w={42}><CommaI /></Slot>
              <Slot $w={22}><VSep /></Slot>
              <Slot $w={44}><DecI more /></Slot>
              <Slot $w={46}><DecI /></Slot>
            </Row>
          </Group>

          <Group $w={300} $pl={17}>
            <Big $w={96}>
              <BigIcon><CondI /><Chev /></BigIcon>
              <BigLabel>{"Conditional\nFormatting"}</BigLabel>
            </Big>
            <Big $w={90}>
              <BigIcon $gap={3}><TablePaint /><Chev /></BigIcon>
              <BigLabel>{"Format\nas Table"}</BigLabel>
            </Big>
            <Big $w={76}>
              <BigIcon $gap={3}><TablePaint cell /><Chev /></BigIcon>
              <BigLabel>{"Cell\nStyles"}</BigLabel>
            </Big>
          </Group>

          <Group $w={278} $pl={18}>
            <Big $w={76}><BigIcon><InsertI /><Chev /></BigIcon><BigLabel>Insert</BigLabel></Big>
            <Big $w={86}><BigIcon><DeleteI /><Chev /></BigIcon><BigLabel>Delete</BigLabel></Big>
            <Big $w={80}><BigIcon><FormatI /><Chev /></BigIcon><BigLabel>Format</BigLabel></Big>
          </Group>

          <Group $w={256} $pl={14}>
            <Small $w={58}>
              <SmallRow><Slot $w={40}><SigmaI /></Slot><Slot $w={18}><Chev /></Slot></SmallRow>
              <SmallRow><Slot $w={40}><FillDownI /></Slot><Slot $w={18}><Chev /></Slot></SmallRow>
              <SmallRow><Slot $w={40}><ClearI /></Slot><Slot $w={18}><Chev /></Slot></SmallRow>
            </Small>
            <Big $w={88}>
              <BigIcon><SortI /><Chev /></BigIcon>
              <BigLabel>{"Sort &\nFilter"}</BigLabel>
            </Big>
            <Big $w={74}>
              <BigIcon><FindI /><Chev /></BigIcon>
              <BigLabel>{"Find &\nSelect"}</BigLabel>
            </Big>
          </Group>

          <Group $w={136} $pl={12} $last>
            <Big $w={80}>
              <BigIcon><AnalyseI /></BigIcon>
              <BigLabel>{"Analyse\nData"}</BigLabel>
            </Big>
          </Group>
        </Ribbon>

        <FormulaBar>
          <NameBox>
            F39
            <Stepper><Tri /><Tri dir="down" /></Stepper>
          </NameBox>
          <Slot $w={66}><XI /></Slot>
          <Slot $w={30}><CheckI /></Slot>
          <Slot $w={72}><ToolText $serif $italic $size={26} $color="#444">fx</ToolText></Slot>
          <FxSep />
          <Slot $w={24} $ml={2045}><Tri dir="down" c="#666" w={12} h={10} /></Slot>
        </FormulaBar>

        <Sheet>
          <Corner />
          <ColHead $col={2} />
          {COLS.map((c, i) => (
            <ColHead key={c} $col={i + 3} $on={c === "F"} $freeze={c === "J"}>{c}</ColHead>
          ))}
          <ColHead $col={12} />

          {ROW_LABELS.map((n, i) => (
            <RowHead key={i} $row={i + 1}>{n}</RowHead>
          ))}
          <RowHead $row={21} $top>21</RowHead>

          <SheetTitle>Weekly Schedule</SheetTitle>
          <DateLabel>Period Start Date :</DateLabel>
          <DateBox>Sunday 13 April 2014</DateBox>

          <Cell $col={3} $row={8} $bg="#eeeeee" $top $left $size={25} $weight={700} $color="#595959">Staff</Cell>
          {DAYS.map((d, i) => (
            <Cell key={d} $col={i + 4} $row={8} $bg="#eeeeee" $top $size={25} $weight={700} $color="#595959">{d}</Cell>
          ))}

          {STAFF.map((s) => (
            <React.Fragment key={s.row}>
              <Cell $col={3} $row={s.row + 1} $span={2} $left>
                <Line>{s.name}</Line>
                <Line>{s.pay}</Line>
              </Cell>
              {s.shifts.map((shift, i) => (
                <Cell key={i} $col={i + 4} $row={s.row + 1} $span={2} $bg={shift ? "#dde3c1" : "#fff"} $size={22.7} $color="#333">
                  {shift && <Line>{shift[0]}</Line>}
                  {shift && <Line>{shift[1]}</Line>}
                </Cell>
              ))}
            </React.Fragment>
          ))}

          <Cell $col={3} $row={17} $bg="#f2f2f2" $top $left $start $size={31.5}>36 / 120 hours</Cell>
          <Cell $col={3} $row={18} $bg="#f2f2f2" $left $start $size={31.5}>Labor Cost $540,0.00</Cell>
          {HOURS.map((h, i) => (
            <Cell key={i} $col={i + 4} $row={17} $bg="#f2f2f2" $top $size={25}>{h}</Cell>
          ))}
          {COSTS.map((c, i) => (
            <Cell key={i} $col={i + 4} $row={18} $bg="#f2f2f2" $size={25}>{c}</Cell>
          ))}

          <Painter><PaintBadge /></Painter>
        </Sheet>

        <TabBar>
          <Nav $w={37}><Tri dir="left" c="#b4b4b4" w={12} h={24} /></Nav>
          <Nav $w={37}><Tri dir="right" c="#b4b4b4" w={12} h={24} /></Nav>
          <ActiveSheet><ActiveFace>Schedule</ActiveFace></ActiveSheet>
          <SheetTab $w={118} $ml={7} $bg="#081f5c" $color="#fff">Shifts</SheetTab>
          <TabSep $l={5} $r={5} />
          <SheetTab $w={147} $bg="#66a8c5" $color="#111">Employees</SheetTab>
          <TabSep $l={5} $r={0} />
          <Plus>+</Plus>
          <TabSep $l={0} $r={0} />
        </TabBar>

        <StatusBar>
          Ready
          <ViewButton $w={61} $first $on><NormalView /></ViewButton>
          <ViewButton $w={58}><PageView /></ViewButton>
          <ViewButton $w={58}><BreakView /></ViewButton>
          <Slot $w={24} $ml={10}><ToolText $size={26} $weight={700} $color="#666">−</ToolText></Slot>
          <Zoom />
          <Slot $w={20}><ToolText $size={26} $weight={700} $color="#666">+</ToolText></Slot>
          <ZoomText>151%</ZoomText>
        </StatusBar>
      </Window>
    </Page>
  );
}
